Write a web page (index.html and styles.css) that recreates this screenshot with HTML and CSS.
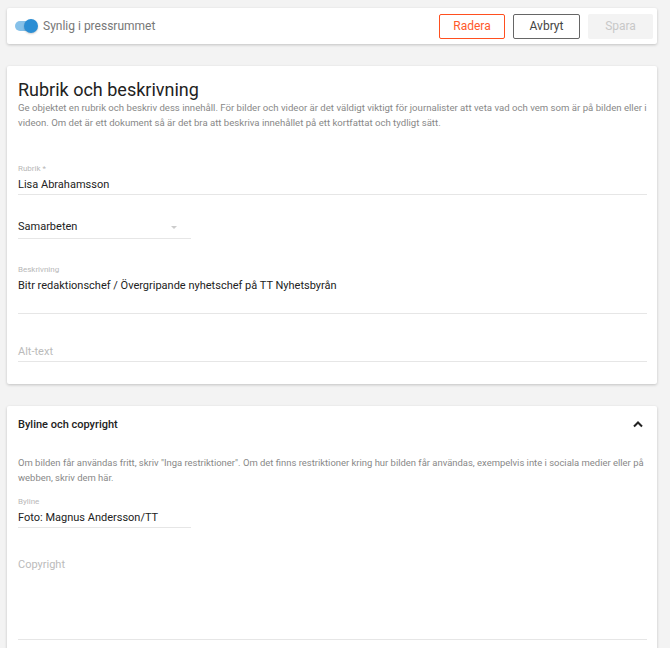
FILE: index.html
```html
<!DOCTYPE html>
<html lang="sv">
<head>
  <meta charset="UTF-8" />
  <title>Redigera objekt</title>
  <link rel="stylesheet" href="styles.css">
</head>
<body>
  <div class="toolbar card">
    <label class="toggle">
      <span class="toggle-track"><span class="toggle-knob"></span></span>
      <span class="toggle-label">Synlig i pressrummet</span>
    </label>
    <div class="actions">
      <button class="btn btn-danger">Radera</button>
      <button class="btn btn-outline">Avbryt</button>
      <button class="btn btn-disabled" disabled>Spara</button>
    </div>
  </div>

  <div class="card section">
    <h2 class="section-title">Rubrik och beskrivning</h2>
    <p class="section-desc">Ge objektet en rubrik och beskriv dess innehåll. För bilder och videor är det väldigt viktigt för journalister att veta vad och vem som är på bilden eller i videon. Om det är ett dokument så är det bra att beskriva innehållet på ett kortfattat och tydligt sätt.</p>

    <div class="field field-first">
      <div class="field-label">Rubrik *</div>
      <div class="field-value">Lisa Abrahamsson</div>
    </div>

    <div class="field field-select">
      <div class="field-value">Samarbeten</div>
      <span class="select-arrow"></span>
    </div>

    <div class="field field-gap">
      <div class="field-label">Beskrivning</div>
      <div class="field-value field-area">Bitr redaktionschef / Övergripande nyhetschef på TT Nyhetsbyrån</div>
    </div>

    <div class="field field-alt">
      <div class="field-value placeholder">Alt-text</div>
    </div>
  </div>

  <div class="card section section-byline">
    <div class="section-head">
      <h3 class="section-subtitle">Byline och copyright</h3>
      <svg class="chevron" width="12" height="8" viewBox="0 0 12 8">
        <path d="M2 6.5 L6 2.5 L10 6.5" fill="none" stroke="#222" stroke-width="2"/>
      </svg>
    </div>
    <p class="section-desc desc-byline">Om bilden får användas fritt, skriv "Inga restriktioner". Om det finns restriktioner kring hur bilden får användas, exempelvis inte i sociala medier eller på webben, skriv dem här.</p>

    <div class="field field-short">
      <div class="field-label">Byline</div>
      <div class="field-value">Foto: Magnus Andersson/TT</div>
    </div>

    <div class="field field-copyright">
      <div class="field-value placeholder field-tall">Copyright</div>
    </div>
  </div>
</body>
</html>
```

FILE: styles.css
```css
* {
  box-sizing: border-box;
  margin: 0;
  padding: 0;
}

body {
  font-family: Roboto, "Liberation Sans", sans-serif;
  background: #f3f3f3;
  color: #222;
  padding: 8px 13px 0 7px;
}

.card {
  background: #fff;
  box-shadow: 0 1px 3px rgba(0, 0, 0, 0.2);
  border-radius: 2px;
}

/* top bar */
.toolbar {
  height: 36px;
  display: flex;
  align-items: center;
  justify-content: space-between;
  padding: 0 4px 0 8px;
}

.toggle {
  display: flex;
  align-items: center;
  gap: 5px;
}

.toggle-track {
  position: relative;
  width: 19px;
  height: 10px;
  border-radius: 5px;
  background: #86c1e9;
  margin-right: 4px;
}

.toggle-knob {
  position: absolute;
  top: -2px;
  left: 9px;
  width: 14px;
  height: 14px;
  border-radius: 50%;
  background: #2b8ed4;
  box-shadow: 0 1px 2px rgba(0, 0, 0, 0.2);
}

.toggle-label {
  font-size: 12px;
  color: #777;
}

.actions {
  display: flex;
  gap: 8px;
}

.btn {
  font-family: inherit;
  font-size: 12px;
  height: 25px;
  width: 66px;
  border-radius: 2px;
  background: #fff;
  cursor: pointer;
}

.btn-danger {
  border: 1px solid #ff4f1f;
  color: #ff5a2a;
}

.btn-outline {
  width: 67px;
  border: 1px solid #666;
  color: #444;
}

.btn-disabled {
  width: 65px;
  border: none;
  background: #f3f3f3;
  color: #c8c8c8;
}

/* sections */
.section {
  margin-top: 22px;
  padding: 14px 10px 22px 11px;
}

.section-title {
  font-size: 18px;
  font-weight: 400;
  line-height: 20px;
  color: #222;
}

.section-desc {
  font-size: 9.6px;
  line-height: 15px;
  color: #888;
}

.field-label {
  font-size: 8px;
  line-height: 10px;
  color: #b8b8b8;
  margin-bottom: 3px;
}

.field-value {
  font-size: 11px;
  line-height: 16px;
  color: #222;
  border-bottom: 1px solid #e6e6e6;
  padding-bottom: 1px;
}

.placeholder {
  color: #bbb;
}

.field-first {
  margin-top: 34px;
}

.field-select {
  position: relative;
  width: 173px;
  margin-top: 24px;
}

.field-select .field-value {
  padding-bottom: 3px;
}

.select-arrow {
  position: absolute;
  right: 14px;
  top: 7px;
  border-left: 3px solid transparent;
  border-right: 3px solid transparent;
  border-top: 3px solid #ccc;
}

.field-gap {
  margin-top: 26px;
}

.field-area {
  height: 36px;
}

.field-alt {
  margin-top: 30px;
}

/* byline section */
.section-byline {
  margin-top: 22px;
  padding-top: 11px;
}

.section-head {
  display: flex;
  align-items: center;
  justify-content: space-between;
  height: 14px;
}

.section-subtitle {
  font-size: 11px;
  font-weight: 500;
  color: #222;
}

.chevron {
  margin-right: 3px;
}

.desc-byline {
  margin-top: 24px;
  font-size: 9.45px;
}

.field-short {
  width: 173px;
  margin-top: 12px;
}

.field-copyright {
  margin-top: 29px;
}

.field-tall {
  height: 83px;
}
```
